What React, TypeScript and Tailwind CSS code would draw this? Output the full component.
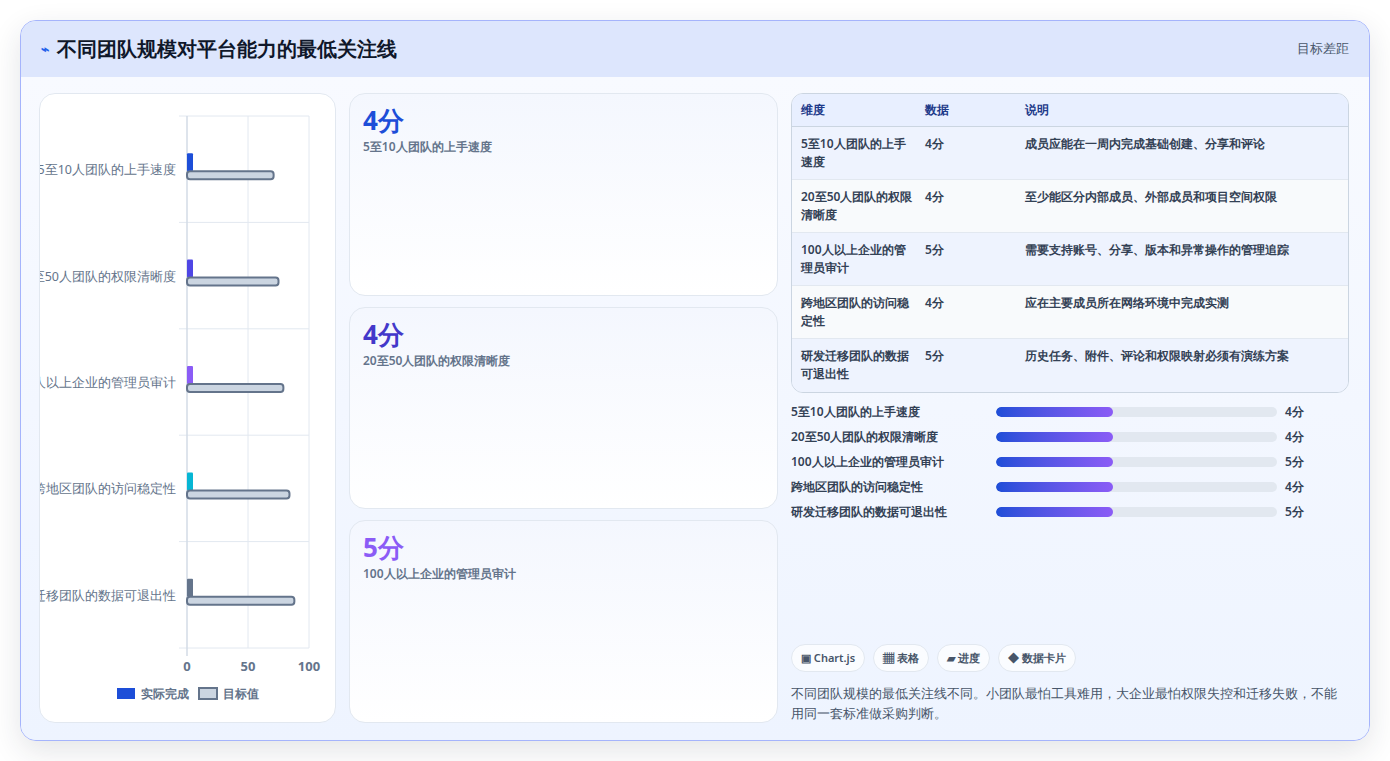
const rows = [
  { name: "5至10人团队的上手速度", score: "4分", target: 71, color: "#1d4ed8", desc: "成员应能在一周内完成基础创建、分享和评论" },
  { name: "20至50人团队的权限清晰度", score: "4分", target: 75, color: "#4f46e5", desc: "至少能区分内部成员、外部成员和项目空间权限" },
  { name: "100人以上企业的管理员审计", score: "5分", target: 79, color: "#8b5cf6", desc: "需要支持账号、分享、版本和异常操作的管理追踪" },
  { name: "跨地区团队的访问稳定性", score: "4分", target: 84, color: "#06b6d4", desc: "应在主要成员所在网络环境中完成实测" },
  { name: "研发迁移团队的数据可退出性", score: "5分", target: 88, color: "#64748b", desc: "历史任务、附件、评论和权限映射必须有演练方案" },
];

const tableNames = [
  ["5至10人团队的上手", "速度"],
  ["20至50人团队的权限", "清晰度"],
  ["100人以上企业的管", "理员审计"],
  ["跨地区团队的访问稳", "定性"],
  ["研发迁移团队的数据", "可退出性"],
];

function Chart() {
  const x0 = 147, w = 122, top = 22, rowH = 106.4;
  return (
    <svg width="296" height="628" className="block">
      {[0, 50, 100].map((v) => (
        <line key={v} x1={x0 + (v / 100) * w} y1={top} x2={x0 + (v / 100) * w} y2={top + rowH * 5 + (v === 0 ? 8 : 0)} stroke="#e2e8f0" />
      ))}
      {[0, 1, 2, 3, 4, 5].map((i) => (
        <line key={i} x1={x0 - 8} y1={top + rowH * i} x2={x0 + w} y2={top + rowH * i} stroke="#e2e8f0" />
      ))}
      <line x1={x0} y1={top} x2={x0} y2={top + rowH * 5 + 8} stroke="#cbd5e1" />
      {rows.map((r, i) => {
        const cy = top + rowH * i + rowH / 2;
        return (
          <g key={i}>
            <text x={x0 - 11} y={cy + 5} textAnchor="end" fontSize="12.5" fill="#64748b">{r.name}</text>
            <rect x={x0} y={cy - 16} width={6} height={18} rx={1} fill={r.color} />
            <rect x={x0} y={cy + 2} width={(r.target / 100) * w} height={8} rx={3} fill="#cbd5e1" stroke="#64748b" strokeWidth="2" />
          </g>
        );
      })}
      {[0, 50, 100].map((v) => (
        <text key={v} x={x0 + (v / 100) * w} y={577} textAnchor="middle" fontSize="13" fontWeight="700" fill="#64748b">{v}</text>
      ))}
      <rect x={77} y={594} width={18} height={11} fill="#1d4ed8" />
      <text x={101} y={604} fontSize="12" fontWeight="700" fill="#64748b">实际完成</text>
      <rect x={159} y={594} width={18} height={11} fill="#cbd5e1" stroke="#64748b" strokeWidth="2" />
      <text x={183} y={604} fontSize="12" fontWeight="700" fill="#64748b">目标值</text>
    </svg>
  );
}

export default function App() {
  const cards = [
    { v: "4分", t: "5至10人团队的上手速度", c: "text-[#1d4ed8]" },
    { v: "4分", t: "20至50人团队的权限清晰度", c: "text-[#4338ca]" },
    { v: "5分", t: "100人以上企业的管理员审计", c: "text-[#8b5cf6]" },
  ];
  return (
    <div className="w-[1390px] h-[761px] bg-white p-5 font-['Liberation_Sans','Noto_Sans_CJK_SC',sans-serif]">
      <div className="h-[721px] rounded-2xl border border-[#a5b4fc] bg-[#eef4ff] shadow-[0_10px_30px_rgba(30,41,59,0.12)] overflow-hidden flex flex-col">
        <div className="h-[56px] bg-[#dde6fd] flex items-center justify-between px-5 shrink-0">
          <div className="flex items-center gap-2">
            <span className="text-[#2563eb] text-sm font-bold">⌁</span>
            <span className="text-[20px] font-bold text-[#0f172a]">不同团队规模对平台能力的最低关注线</span>
          </div>
          <span className="text-[13px] text-[#475569]">目标差距</span>
        </div>
        <div className="flex-1 flex gap-[13px] pl-[18px] pr-5 pt-[16px] pb-[18px] bg-gradient-to-b from-[#f8faff] to-[#eef4ff]">
          <div className="w-[297px] bg-white rounded-2xl border border-[#e2e8f0] overflow-hidden shrink-0">
            <Chart />
          </div>
          <div className="w-[429px] flex flex-col gap-[11px] shrink-0">
            {cards.map((c, i) => (
              <div key={i} className="flex-1 rounded-2xl border border-[#e2e8f0] bg-gradient-to-b from-[#f4f7fe] to-white px-[13px] pt-[10px]">
                <div className={`text-[26px] font-bold leading-[32px] ${c.c}`}>{c.v}</div>
                <div className="text-[12px] font-semibold text-[#64748b] mt-[2px]">{c.t}</div>
              </div>
            ))}
          </div>
          <div className="flex-1 flex flex-col">
            <div className="rounded-xl border border-[#cbd5e1] overflow-hidden text-[12px] text-[#334155] font-semibold">
              <div className="flex h-[33px] items-center bg-[#e8efff] text-[#1e3a8a] border-b border-[#cbd5e1]">
                <div className="w-[133px] pl-[9px]">维度</div>
                <div className="w-[100px]">数据</div>
                <div className="flex-1">说明</div>
              </div>
              {rows.map((r, i) => (
                <div key={i} className={`flex h-[53px] pt-[8px] leading-[18px] ${i % 2 === 0 ? "bg-[#eef3fe]" : "bg-[#f8fafc]"} ${i < 4 ? "border-b border-[#e2e8f0]" : ""}`}>
                  <div className="w-[133px] pl-[9px]">{tableNames[i][0]}<br />{tableNames[i][1]}</div>
                  <div className="w-[100px]">{r.score}</div>
                  <div className="flex-1">{r.desc}</div>
                </div>
              ))}
            </div>
            <div className="mt-[10px] flex flex-col gap-[7px]">
              {rows.map((r, i) => (
                <div key={i} className="flex items-center h-[18px] text-[12px] font-semibold text-[#334155]">
                  <div className="w-[205px]">{r.name}</div>
                  <div className="w-[281px] h-[10px] rounded-full bg-[#e2e8f0] overflow-hidden">
                    <div className="w-[117px] h-full rounded-full bg-gradient-to-r from-[#1d4ed8] to-[#8b5cf6]" />
                  </div>
                  <div className="ml-2">{r.score}</div>
                </div>
              ))}
            </div>
            <div className="flex-1" />
            <div className="flex gap-2 text-[11px] font-semibold text-[#475569]">
              {["▣ Chart.js", "▦ 表格", "▰ 进度", "◆ 数据卡片"].map((t) => (
                <span key={t} className="px-[9px] h-[28px] flex items-center rounded-full bg-white/70 border border-[#e2e8f0]">{t}</span>
              ))}
            </div>
            <p className="mt-[11px] text-[13px] leading-[20px] text-[#475569]">不同团队规模的最低关注线不同。小团队最怕工具难用，大企业最怕权限失控和迁移失败，不能用同一套标准做采购判断。</p>
          </div>
        </div>
      </div>
    </div>
  );
}
